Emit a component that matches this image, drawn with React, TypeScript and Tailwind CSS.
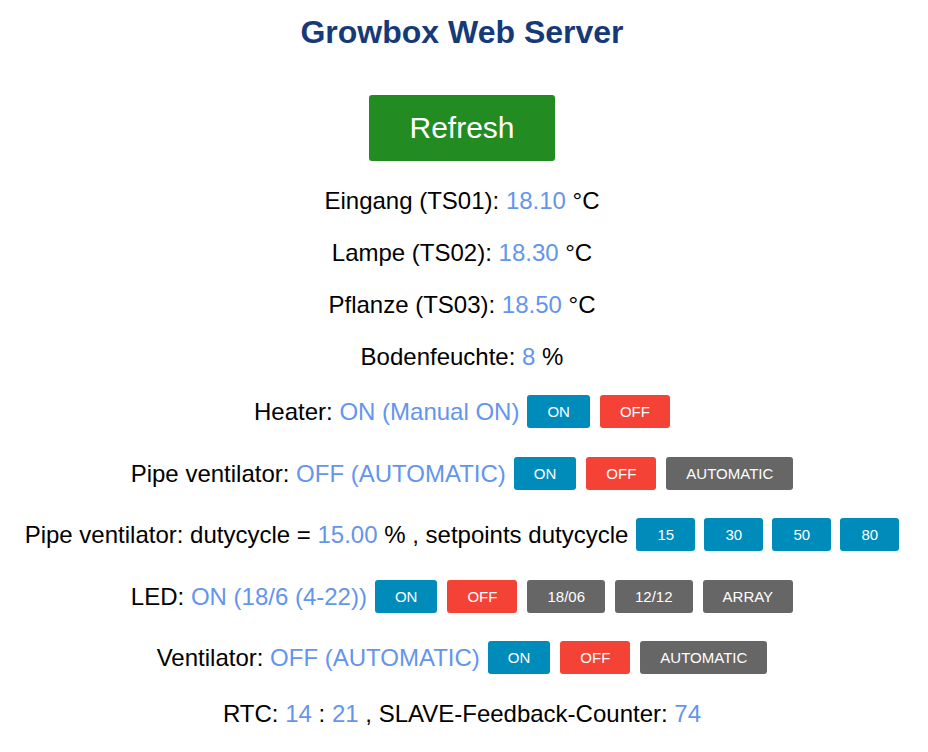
const blue = "bg-[#008cba]";
const red = "bg-[#f44336]";
const gray = "bg-[#666666]";

type Btn = { label: string; color: string };

const Button = ({ label, color }: Btn) => (
  <button
    className={`${color} h-[33px] min-w-[59px] rounded-[3px] px-5 text-[15px] leading-none text-white`}
  >
    {label}
  </button>
);

const V = ({ children }: { children: React.ReactNode }) => (
  <span className="text-[#6495ed]">{children}</span>
);

const Row = ({
  children,
  buttons,
  className = "",
  gap = "gap-[10px]",
}: {
  children: React.ReactNode;
  buttons?: Btn[];
  className?: string;
  gap?: string;
}) => (
  <div className={`flex items-center justify-center ${className}`}>
    <p className="whitespace-pre">{children}</p>
    {buttons && (
      <div className={`ml-2 flex ${gap}`}>
        {buttons.map((b) => (
          <Button key={b.label} {...b} />
        ))}
      </div>
    )}
  </div>
);

export default function App() {
  return (
    <div
      className="flex min-h-screen flex-col items-center bg-white pr-1 text-[24px] leading-none text-black"
      style={{ fontFamily: '"Liberation Sans", Arial, sans-serif' }}
    >
      <h1 className="mt-[16px] text-[32px] leading-none font-bold text-[#163a78]">
        Growbox Web Server
      </h1>
      <button className="mt-[47px] h-[66px] w-[186px] rounded-[3px] bg-[#228b22] text-[30px] text-white">
        Refresh
      </button>
      <Row className="mt-[28px] h-[24px]">
        Eingang (TS01): <V>18.10</V> °C
      </Row>
      <Row className="mt-[28px] h-[24px]">
        Lampe (TS02): <V>18.30</V> °C
      </Row>
      <Row className="mt-[28px] h-[24px]">
        Pflanze (TS03): <V>18.50</V> °C
      </Row>
      <Row className="mt-[28px] h-[24px]">
        Bodenfeuchte: <V>8</V> %
      </Row>
      <Row
        className="mt-[26px]"
        buttons={[
          { label: "ON", color: blue },
          { label: "OFF", color: red },
        ]}
      >
        Heater: <V>ON (Manual ON)</V>
      </Row>
      <Row
        className="mt-[29px]"
        buttons={[
          { label: "ON", color: blue },
          { label: "OFF", color: red },
          { label: "AUTOMATIC", color: gray },
        ]}
      >
        Pipe ventilator: <V>OFF (AUTOMATIC)</V>
      </Row>
      <Row
        className="mt-[28px]"
        gap="gap-[9px]"
        buttons={[
          { label: "15", color: blue },
          { label: "30", color: blue },
          { label: "50", color: blue },
          { label: "80", color: blue },
        ]}
      >
        Pipe ventilator: dutycycle = <V>15.00</V> % , setpoints dutycycle
      </Row>
      <Row
        className="mt-[29px]"
        buttons={[
          { label: "ON", color: blue },
          { label: "OFF", color: red },
          { label: "18/06", color: gray },
          { label: "12/12", color: gray },
          { label: "ARRAY", color: gray },
        ]}
      >
        LED: <V>ON (18/6 (4-22))</V>
      </Row>
      <Row
        className="mt-[28px]"
        buttons={[
          { label: "ON", color: blue },
          { label: "OFF", color: red },
          { label: "AUTOMATIC", color: gray },
        ]}
      >
        Ventilator: <V>OFF (AUTOMATIC)</V>
      </Row>
      <Row className="mt-[28px] h-[24px]">
        RTC: <V>14</V> : <V>21</V> , SLAVE-Feedback-Counter: <V>74</V>
      </Row>
    </div>
  );
}
